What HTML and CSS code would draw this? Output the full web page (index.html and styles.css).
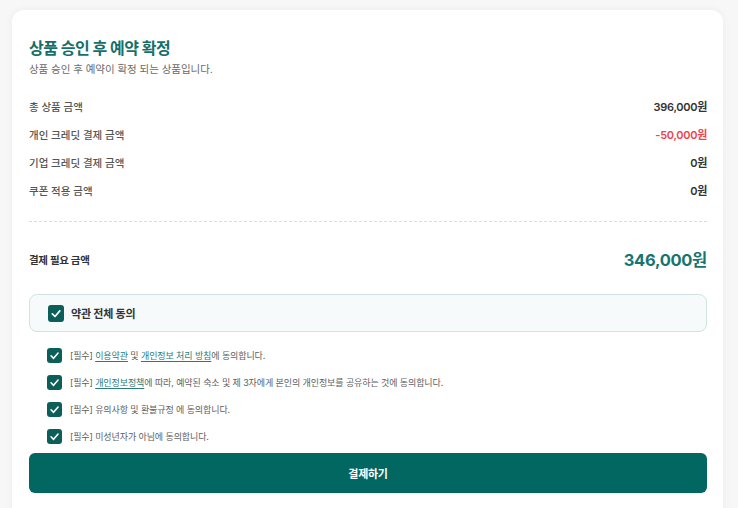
FILE: index.html
```html
<!DOCTYPE html>
<html lang="ko">
<head>
<meta charset="utf-8">
<title>결제</title>
<link rel="stylesheet" href="styles.css">
</head>
<body>
<div class="card">
  <h1 class="title">상품 승인 후 예약 확정</h1>
  <p class="subtitle">상품 승인 후 예약이 확정 되는 상품입니다.</p>

  <div class="rows">
    <div class="row"><span class="label">총 상품 금액</span><span class="value">396,000원</span></div>
    <div class="row"><span class="label">개인 크레딧 결제 금액</span><span class="value minus">-50,000원</span></div>
    <div class="row"><span class="label">기업 크레딧 결제 금액</span><span class="value">0원</span></div>
    <div class="row"><span class="label">쿠폰 적용 금액</span><span class="value">0원</span></div>
  </div>

  <div class="divider"></div>

  <div class="total">
    <span class="total-label">결제 필요 금액</span>
    <span class="total-value">346,000원</span>
  </div>

  <div class="agree-all">
    <span class="check big"><svg viewBox="0 0 16 16"><path d="M4.3 8.3 L7 11 L11.8 5.4" fill="none" stroke="#fff" stroke-width="1.7" stroke-linecap="round" stroke-linejoin="round"/></svg></span>
    <span class="agree-all-text">약관 전체 동의</span>
  </div>

  <ul class="terms">
    <li class="term"><span class="check"><svg viewBox="0 0 16 16"><path d="M4.3 8.3 L7 11 L11.8 5.4" fill="none" stroke="#fff" stroke-width="1.7" stroke-linecap="round" stroke-linejoin="round"/></svg></span><span class="term-text">[필수] <a class="link">이용약관</a> 및 <a class="link">개인정보 처리 방침</a>에 동의합니다.</span></li>
    <li class="term"><span class="check"><svg viewBox="0 0 16 16"><path d="M4.3 8.3 L7 11 L11.8 5.4" fill="none" stroke="#fff" stroke-width="1.7" stroke-linecap="round" stroke-linejoin="round"/></svg></span><span class="term-text">[필수] <a class="link">개인정보정책</a>에 따라, 예약된 숙소 및 제 3자에게 본인의 개인정보를 공유하는 것에 동의합니다.</span></li>
    <li class="term"><span class="check"><svg viewBox="0 0 16 16"><path d="M4.3 8.3 L7 11 L11.8 5.4" fill="none" stroke="#fff" stroke-width="1.7" stroke-linecap="round" stroke-linejoin="round"/></svg></span><span class="term-text">[필수] 유의사항 및 환불규정 에 동의합니다.</span></li>
    <li class="term"><span class="check"><svg viewBox="0 0 16 16"><path d="M4.3 8.3 L7 11 L11.8 5.4" fill="none" stroke="#fff" stroke-width="1.7" stroke-linecap="round" stroke-linejoin="round"/></svg></span><span class="term-text">[필수] 미성년자가 아님에 동의합니다.</span></li>
  </ul>

  <button class="pay">결제하기</button>
</div>
</body>
</html>
```

FILE: styles.css
```css
* { box-sizing: border-box; }
html, body { height: 100%; }
body {
  margin: 0;
  padding: 10px 15px 0 12px;
  background: #f7f7f7;
  font-family: Inter, "Noto Sans CJK KR", sans-serif;
  overflow: hidden;
}
.card {
  background: #fff;
  border-radius: 12px;
  box-shadow: 0 0 8px rgba(0,0,0,0.05);
  padding: 27px 16px 30px 17px;
  min-height: 520px;
}
.title {
  margin: 0;
  font-size: 16px;
  line-height: 22px;
  font-weight: 700;
  color: #156f69;
  letter-spacing: -0.5px;
}
.subtitle {
  margin: 3px 0 0;
  font-size: 10.5px;
  line-height: 16px;
  color: #6a6a6a;
  letter-spacing: -0.05px;
}
.rows { margin-top: 14px; }
.row {
  display: flex;
  justify-content: space-between;
  align-items: center;
  height: 28px;
}
.label {
  font-size: 10.5px;
  font-weight: 500;
  color: #555;
  letter-spacing: 0;
}
.value {
  font-size: 11px;
  font-weight: 600;
  color: #333;
  letter-spacing: -0.3px;
}
.value.minus { color: #f1424e; }
.divider {
  margin-top: 17px;
  border-top: 1px dashed #dcdcdc;
}
.total {
  margin-top: 22px;
  height: 30px;
  display: flex;
  justify-content: space-between;
  align-items: center;
}
.total-label {
  font-size: 10.5px;
  font-weight: 700;
  color: #333;
  letter-spacing: -0.3px;
}
.total-value {
  font-size: 16.5px;
  font-weight: 700;
  color: #177570;
  letter-spacing: -0.3px;
}
.agree-all {
  margin-top: 20px;
  height: 38px;
  border: 1px solid #cfe4e2;
  background: #f6fafa;
  border-radius: 8px;
  display: flex;
  align-items: center;
  gap: 7px;
  padding-left: 18px;
}
.check {
  width: 15px;
  height: 15px;
  border-radius: 3px;
  background: #0c5f59;
  display: flex;
  align-items: center;
  justify-content: center;
  flex: none;
}
.check svg { width: 100%; height: 100%; display: block; }
.check.big { width: 16px; height: 17px; }
.agree-all-text {
  font-size: 11px;
  font-weight: 700;
  color: #333;
  letter-spacing: -0.2px;
}
.terms {
  list-style: none;
  margin: 10px 0 0;
  padding: 0 0 0 18px;
}
.term {
  height: 27px;
  display: flex;
  align-items: center;
  gap: 8px;
}
.term-text {
  font-size: 9px;
  color: #5e5e5e;
  letter-spacing: -0.1px;
  white-space: nowrap;
}
.link {
  color: #2b7c77;
  text-decoration: underline;
  text-underline-offset: 1.5px;
}
.pay {
  display: block;
  width: 100%;
  margin-top: 3px;
  height: 40px;
  border: none;
  border-radius: 6px;
  background: #026661;
  color: #fff;
  font-family: Inter, "Noto Sans CJK KR", sans-serif;
  font-size: 11px;
  font-weight: 700;
  letter-spacing: -0.3px;
}
```
